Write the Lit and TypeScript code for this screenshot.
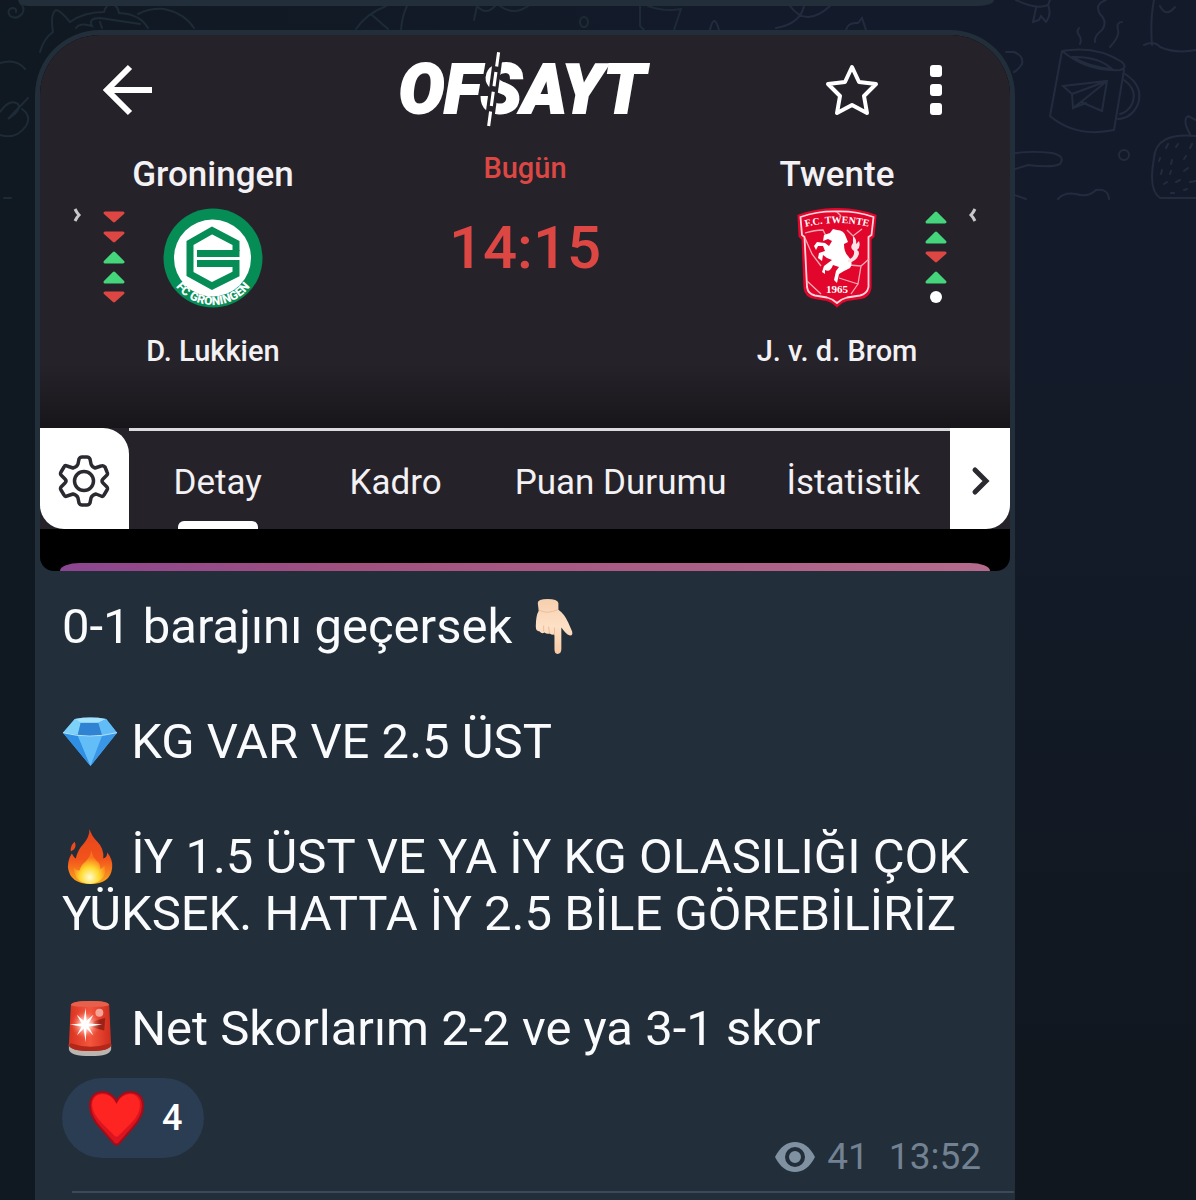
import { LitElement, html, svg, css } from 'lit';
import { customElement, property, state } from 'lit/decorators.js';
import { classMap } from 'lit/directives/class-map.js';

type Result = 'win' | 'loss' | 'draw';

/**
 * Last five results, newest at the bottom.
 */
@customElement('form-guide')
export class FormGuide extends LitElement {
  @property({ attribute: false })
  results: Result[] = [];

  static styles = css`
    :host {
      display: flex;
      flex-direction: column;
      align-items: center;
      gap: 6px;
    }

    svg {
      display: block;
      width: 24px;
      height: 14px;
    }

    .win {
      fill: #45d67c;
      stroke: #45d67c;
    }

    .loss {
      fill: #dc4744;
      stroke: #dc4744;
    }

    .draw {
      fill: #fff;
    }
  `;

  private shape(result: Result) {
    if (result === 'draw') return svg`<circle cx="12" cy="7" r="6" />`;
    const d = result === 'win' ? 'M12 3 L21 12 H3 Z' : 'M12 11 L21 3 H3 Z';
    return svg`<path d=${d} stroke-width="3" stroke-linejoin="round" />`;
  }

  render() {
    return this.results.map(
      (r) => html`<svg class=${r} viewBox="0 0 24 14" aria-label=${r}>${this.shape(r)}</svg>`
    );
  }
}

const groningenCrest = html`
  <svg class="crest" viewBox="0 0 100 100" aria-label="FC Groningen">
    <circle cx="50" cy="50" r="49.5" fill="#058d55" />
    <circle cx="49.5" cy="50" r="38.5" fill="#fff" />
    <path
      d="M73 43 V35 L49 22.5 L27 35 V66 L49 78 L73 66 V55.5 H34"
      fill="none"
      stroke="#058d55"
      stroke-width="7"
    />
    <path d="M34 45.5 H76.5" stroke="#058d55" stroke-width="7" />
    <path id="arc" d="M6 66.5 A47 47 0 0 0 94 66.5" fill="none" />
    <text fill="#fff" font-family="Roboto, sans-serif" font-weight="900" font-size="12">
      <textPath href="#arc" startOffset="50%" text-anchor="middle">FC GRONINGEN</textPath>
    </text>
  </svg>
`;

const twenteCrest = html`
  <svg class="crest" viewBox="0 0 100 100" aria-label="FC Twente">
    <path
      d="M12 8 Q31 1 50 1.5 Q69 1 88 8 L86 28 L83 31 V80 Q82 88 74 89.5 L60 91.5 Q54 93 50 97.5 Q46 93 40 91.5 L28 89.5 Q19 88 18 80 L16 31 L13 28 Z"
      fill="#e2062c"
      stroke="#e2062c"
      stroke-width="3"
    />
    <path
      d="M13.5 9 Q31 3 50 3.5 Q69 3 86.5 9 L84.5 27 L81.5 29 V79 Q80 86 73 87.5 L60 89.5 Q54 91 50 95 Q46 91 40 89.5 L28 87.5 Q21 86 20 79 L17.5 29 L15 27 Z"
      fill="none"
      stroke="#fbd6dc"
      stroke-width="1.8"
    />
    <path
      d="M18 25 Q28 22 36 22 L40 30 M18 30 L25 46 L34 58 M60 22 L66 28 L75 21 M82 51 L74 58 L62 57 M74 58 L71 76 L52 70 M71 76 L64 86 M20 73 L34 86 M50 4 L54 8"
      fill="none"
      stroke="#f7a9b5"
      stroke-width="1.3"
    />
    <path
      d="M37 27 L43 25 L46 21 L50 22 Q57 22 59 29 L61 34 L57 36 Q57 44 61 48 Q67 54 63 60 L57 63 L52 66 L50 75 L47 72 L49 63 L52 59 L46 57 Q43 65 38 62 L38 66 L35 64 L37 58 L45 52 L40 50 L36 47 L35 53 L31 50 L32 45 L38 43 L36 38 L31 38 L29 42 L27 38 L30 34 L38 35 L42 38 L45 33 L41 31 L36 33 Z"
      fill="#fff"
    />
    <path
      d="M61 52 Q68 49 67 43 Q62 40 66 35 L66 28 Q70 31 69 36 L72 33 Q74 39 70 42 Q74 44 70 50 Q66 55 61 54 Z"
      fill="#fbe3e7"
    />
    <g fill="#fff" font-family="Liberation Serif, serif" font-weight="700" text-anchor="middle">
      <path id="brow" d="M14 20 Q50 10 86 20" fill="none" />
      <text font-size="10"><textPath href="#brow" startOffset="50%">F.C. TWENTE</textPath></text>
      <text x="50" y="85" font-size="11">1965</text>
    </g>
  </svg>
`;

/**
 * Match header as the score app draws it: teams, kick-off and tabs.
 */
@customElement('match-card')
export class MatchCard extends LitElement {
  @state()
  private tab = 'Detay';

  private tabs = ['Detay', 'Kadro', 'Puan Durumu', 'İstatistik'];

  static styles = css`
    :host {
      display: block;
      overflow: hidden;
      border-radius: 60px 60px 14px 14px;
      background: #000;
      color: #f3f1f3;
      font-family: Roboto, 'Liberation Sans', sans-serif;
    }

    button {
      margin: 0;
      padding: 0;
      border: 0;
      background: none;
      color: inherit;
      font: inherit;
      cursor: pointer;
    }

    svg {
      display: block;
    }

    .top {
      background: linear-gradient(#25222a 0, #25222a 330px, #18151a 100%);
    }

    .bar {
      display: grid;
      grid-template-columns: 1fr auto 1fr;
      align-items: center;
      height: 110px;
      padding: 0 60px;
    }

    .actions {
      display: flex;
      justify-content: flex-end;
      align-items: center;
      gap: 42px;
    }

    .logo {
      padding-right: 6px;
      font-size: 68px;
      font-weight: 900;
      font-style: italic;
      line-height: 72px;
      color: #fff;
      -webkit-text-stroke: 2px #fff;
    }

    .cut {
      position: relative;
    }

    .cut svg {
      position: absolute;
      left: 0;
      top: 0;
      width: 100%;
      height: 100%;
      overflow: visible;
    }

    .match {
      display: grid;
      grid-template-columns: 40px 34px 164px 1fr 164px 34px 40px;
      justify-items: center;
      padding: 9px 17px 60px;
    }

    .team {
      display: flex;
      flex-direction: column;
      align-items: center;
      white-space: nowrap;
      font-weight: 500;
    }

    .name {
      font-size: 35px;
      line-height: 42px;
    }

    .crest {
      width: 100px;
      height: 100px;
      margin: 12px 0 26px;
      overflow: visible;
    }

    .coach {
      font-size: 29px;
      line-height: 34px;
    }

    .kickoff {
      display: flex;
      flex-direction: column;
      align-items: center;
      gap: 34px;
      color: #dc4744;
      font-weight: 500;
    }

    .day {
      font-size: 29px;
      line-height: 28px;
    }

    .hour {
      font-size: 60px;
      line-height: 64px;
    }

    form-guide {
      margin-top: 56px;
    }

    .more {
      align-self: start;
      margin-top: 54px;
    }

    .nav {
      display: flex;
      height: 101px;
      background: #25222a;
    }

    .tile {
      display: flex;
      align-items: center;
      justify-content: center;
      padding-top: 4px;
      background: #fff;
    }

    .settings {
      width: 89px;
      border-radius: 0 26px 0 24px;
    }

    .next {
      width: 60px;
      border-radius: 0 0 24px 0;
    }

    .tabs {
      display: flex;
      flex: 1;
      border-top: 3px solid #dcdadd;
    }

    .tab {
      position: relative;
      min-width: 178px;
      padding: 4px 30px 0;
      font-size: 35px;
      white-space: nowrap;
    }

    .tab:last-child {
      flex: 1;
    }

    .tab.active::after {
      content: '';
      position: absolute;
      left: 50%;
      bottom: 0;
      width: 80px;
      height: 8px;
      margin-left: -40px;
      border-radius: 6px 6px 0 0;
      background: #fff;
    }

    .promo {
      padding: 34px 20px 0;
    }

    .promo div {
      height: 8px;
      border-radius: 20px 20px 0 0 / 8px 8px 0 0;
      background: linear-gradient(90deg, #8c4590, #a0507f 30%, #b56b8c);
    }
  `;

  render() {
    return html`
      <div class="top">
        <div class="bar">
          <button aria-label="Geri">
            <svg width="54" height="54" viewBox="0 0 54 54" fill="none" stroke="#fff" stroke-width="6">
              <path d="M52 27 H6 M30 4 L7 27 L30 50" />
            </svg>
          </button>
          <div class="logo">OF<span class="cut">S<svg viewBox="0 0 40 72" preserveAspectRatio="none" fill="none">
                <path d="M18 2 L8 71" stroke="#25222a" stroke-width="9" />
                <path d="M18 2 L8 71" stroke="#fff" stroke-width="3" stroke-dasharray="13 5" /></svg></span>AYT</div>
          <div class="actions">
            <button aria-label="Favorilere ekle">
              <svg width="56" height="56" viewBox="0 0 56 56" fill="none" stroke="#fff" stroke-width="4" stroke-linejoin="round">
                <path d="M28 5 L35 20 L52 22 L40 34 L43 51 L28 43 L13 51 L16 34 L4 22 L21 20 Z" />
              </svg>
            </button>
            <button aria-label="Menü">
              <svg width="28" height="52" viewBox="0 0 28 52" fill="#fff">
                <rect x="8" y="1" width="12" height="12" rx="3" />
                <rect x="8" y="20" width="12" height="12" rx="3" />
                <rect x="8" y="39" width="12" height="12" rx="3" />
              </svg>
            </button>
          </div>
        </div>

        <div class="match">
          <button class="more" aria-label="Groningen formu">
            <svg width="12" height="14" viewBox="0 0 12 14" fill="none" stroke="#c9c7ca" stroke-width="3">
              <path d="M4 1 Q6 5 8 7 Q6 9 4 13" />
            </svg>
          </button>
          <form-guide .results=${['loss', 'loss', 'win', 'win', 'loss'] as Result[]}></form-guide>
          <div class="team">
            <span class="name">Groningen</span>
            ${groningenCrest}
            <span class="coach">D. Lukkien</span>
          </div>
          <div class="kickoff">
            <span class="day">Bugün</span>
            <time class="hour" datetime="14:15">14:15</time>
          </div>
          <div class="team">
            <span class="name">Twente</span>
            ${twenteCrest}
            <span class="coach">J. v. d. Brom</span>
          </div>
          <form-guide .results=${['win', 'win', 'loss', 'win', 'draw'] as Result[]}></form-guide>
          <button class="more" aria-label="Twente formu">
            <svg width="12" height="14" viewBox="0 0 12 14" fill="none" stroke="#c9c7ca" stroke-width="3">
              <path d="M8 1 Q6 5 4 7 Q6 9 8 13" />
            </svg>
          </button>
        </div>
      </div>

      <nav class="nav">
        <button class="tile settings" aria-label="Ayarlar">
          <svg width="52" height="52" viewBox="0 0 52 52" fill="none" stroke="#2b2a30" stroke-width="3.5" stroke-linejoin="round">
            <path
              d="M21 4 Q22 2 24 2 H29 Q31 2 32 4 L33 9 Q34 12 37 13 L43 11 Q45 10 47 12 L49 17 Q50 19 49 20 L45 24 Q43 26 45 28 L49 32 Q50 34 49 35 L46 40 Q45 42 43 41 L38 39 Q34 40 33 43 L32 48 Q31 50 29 50 H24 Q22 50 21 48 L20 43 Q19 40 15 39 L9 41 Q7 42 6 40 L3 35 Q2 34 3 32 L7 28 Q9 26 7 24 L3 20 Q2 19 3 17 L6 12 Q7 10 9 11 L15 13 Q19 12 20 9 Z"
            />
            <circle cx="26" cy="26" r="9.5" />
          </svg>
        </button>
        <div class="tabs" role="tablist">
          ${this.tabs.map(
            (t) => html`
              <button
                role="tab"
                aria-selected=${t === this.tab}
                class=${classMap({ tab: true, active: t === this.tab })}
                @click=${() => (this.tab = t)}
              >
                ${t}
              </button>
            `
          )}
        </div>
        <button class="tile next" aria-label="Sonraki">
          <svg width="20" height="30" viewBox="0 0 20 30" fill="none" stroke="#2b2a30" stroke-width="5" stroke-linecap="round">
            <path d="M5 4 L16 15 L5 26" />
          </svg>
        </button>
      </nav>

      <div class="promo"><div></div></div>
    `;
  }
}

const pointDown = html`
  <svg class="emoji" viewBox="0 0 58 58" aria-label="👇🏻">
    <defs>
      <linearGradient id="skin" x2="0" y2="1">
        <stop offset="0" stop-color="#f6cfae" />
        <stop offset="0.5" stop-color="#fde0c6" />
        <stop offset="1" stop-color="#f7c9a3" />
      </linearGradient>
    </defs>
    <path
      d="M14 5 Q14 1 24 1 Q34 1 35 5 L35 12 Q41 16 45 25 L49 34 Q50 39 46 38 Q43 37 38 30 L38 52 Q38 57 34 57 Q31 57 31 52 L31 37 Q29 38 26 36 Q23 37 21 35 Q18 37 16 34 Q12 34 12 29 Q12 18 15 13 Z"
      fill="url(#skin)"
    />
    <path d="M15 12 Q23 17 34 12 M20 28 L20 34 M25 29 L26 36 M31 30 V38" fill="none" stroke="#ecbd99" stroke-width="1" />
  </svg>
`;

const gem = html`
  <svg class="emoji" viewBox="0 0 58 58" aria-label="💎">
    <path d="M1 20 L13 6 Q29 3 45 6 L56 20 L29 54 Z" fill="#4fa9ee" />
    <path d="M13 6 L19 10 L16 22 L1 20 Z" fill="#7ed2f8" />
    <path d="M19 10 L37 10 L41 23 Q28 25 16 23 Z" fill="#2f83d2" />
    <path d="M13 6 Q29 3 45 6 L37 10 H19 Z" fill="#a5e2fb" />
    <path d="M45 6 L56 20 L41 23 L37 10 Z" fill="#62bcf5" />
    <path d="M1 20 L16 23 L29 54 Z" fill="#2f8fe4" />
    <path d="M16 23 Q28 25 41 23 L29 54 Z" fill="#63bdf6" />
    <path d="M41 23 L56 20 L29 54 Z" fill="#3a97e8" />
    <path d="M1 20 Q28 27 56 20" fill="none" stroke="#b4e6fd" stroke-width="1" />
  </svg>
`;

const fire = html`
  <svg class="emoji" viewBox="0 0 58 58" aria-label="🔥">
    <defs>
      <linearGradient id="flame" x2="0" y2="1">
        <stop offset="0" stop-color="#e8421c" />
        <stop offset="0.55" stop-color="#f2541b" />
        <stop offset="1" stop-color="#fba91d" />
      </linearGradient>
      <radialGradient id="core" cx="0.5" cy="0.8" r="0.6">
        <stop offset="0" stop-color="#fffbd0" />
        <stop offset="0.5" stop-color="#ffd92e" />
        <stop offset="1" stop-color="#f9721d" />
      </radialGradient>
    </defs>
    <path
      d="M28 1 Q30 8 36 14 Q43 21 42 31 Q46 30 46 25 Q52 32 51 41 Q49 57 29 57 Q8 57 6 40 Q6 32 10 26 Q12 30 14 31 Q16 22 22 16 Q28 9 28 1 Z"
      fill="url(#flame)"
    />
    <path d="M13 14 Q15 19 12 22 L9 24 Q8 18 13 14 Z" fill="#ee4a1b" />
    <path
      d="M30 23 Q31 30 36 34 Q39 36 39 42 L44 38 Q46 55 29 57 Q12 56 12 40 Q15 44 18 43 Q19 38 24 34 Q29 29 30 23 Z"
      fill="url(#core)"
    />
  </svg>
`;

const siren = html`
  <svg class="emoji" viewBox="0 0 58 58" aria-label="🚨">
    <defs>
      <linearGradient id="lamp" x2="1" y2="0">
        <stop offset="0" stop-color="#d8321f" />
        <stop offset="0.5" stop-color="#f4553d" />
        <stop offset="1" stop-color="#cf2c1c" />
      </linearGradient>
      <radialGradient id="glow">
        <stop offset="0" stop-color="#fff" />
        <stop offset="0.4" stop-color="#ffb5a6" />
        <stop offset="1" stop-color="#f4553d" stop-opacity="0" />
      </radialGradient>
    </defs>
    <path d="M7 45 Q29 50 50 45 V50 Q49 57 29 57 Q8 57 7 50 Z" fill="#b9b6b2" />
    <path d="M9 5 Q10 1 29 1 Q47 1 48 5 L50 46 Q48 52 29 52 Q9 52 7 46 Z" fill="url(#lamp)" />
    <path d="M9 5 Q10 1 29 1 Q47 1 48 5 Q46 7 29 7 Q11 7 9 5 Z" fill="#e8604c" />
    <path d="M9 44 Q29 51 49 44 L50 46 Q48 52 29 52 Q9 52 7 46 Z" fill="#b3261a" />
    <path d="M32 22 L44 18 L43 31 L31 28 Z" fill="#9c2218" />
    <circle cx="38" cy="13" r="4" fill="#f6a497" />
    <circle cx="24" cy="25" r="15" fill="url(#glow)" />
    <path
      d="M24 8 L25 21 L32 15 L27 24 L41 25 L27 27 L32 36 L25 29 L24 43 L22 29 L15 36 L20 27 L8 25 L20 24 L15 15 L22 21 Z"
      fill="#fff"
    />
  </svg>
`;

const heart = html`
  <svg class="heart" viewBox="0 0 56 56" aria-hidden="true">
    <path
      d="M28 11 Q23 2 14 2 Q2 3 2 16 Q2 26 12 37 L25 52 Q28 55 31 52 L44 37 Q54 26 54 16 Q54 3 42 2 Q33 2 28 11 Z"
      fill="#dc1420"
      stroke="#a50c18"
      stroke-width="2"
    />
    <path
      d="M28 14 Q23 4 14 4 Q4 5 4 15 Q5 24 14 33 L26 45 Q28 47 30 45 L42 33 Q51 24 51 15 Q51 5 42 4 Q33 4 28 14 Z"
      fill="#fe2422"
    />
  </svg>
`;

@customElement('app-root')
export class AppRoot extends LitElement {
  @state()
  private liked = false;

  static styles = css`
    :host {
      display: flex;
      flex-direction: column;
      position: relative;
      min-height: 100vh;
      overflow: hidden;
      background:
        linear-gradient(90deg, #101922 0, #101922 20px, transparent 60%),
        linear-gradient(#131a2a 0, #131b29 40%, #10171f 90%);
      color: #fafbfc;
      font-family: Roboto, 'Liberation Sans', sans-serif;
    }

    .doodles {
      position: absolute;
      top: 0;
      fill: none;
      stroke-width: 2;
      stroke-linecap: round;
    }

    .left {
      left: 0;
      stroke: #1d2b36;
    }

    .right {
      right: 0;
      stroke: #232c3e;
    }

    .previous,
    .bubble {
      position: relative;
      background: #222e3a;
    }

    .previous {
      height: 6px;
      margin: 0 202px 24px 18px;
      border-radius: 0 0 16px 10px / 0 0 6px 6px;
    }

    .bubble {
      flex: 1;
      margin: 0 181px 0 35px;
      padding: 5px 5px 0;
      border-radius: 65px 65px 0 0;
    }

    .text {
      display: flex;
      flex-direction: column;
      gap: 58px;
      padding: 27px 29px 0 22px;
      font-size: 49px;
      line-height: 57px;
    }

    p {
      margin: 0;
    }

    .emoji {
      width: 57px;
      height: 57px;
      vertical-align: -12px;
    }

    .foot {
      display: flex;
      justify-content: space-between;
      padding: 21px 29px 13px 22px;
    }

    .reaction {
      display: flex;
      align-items: center;
      gap: 17px;
      height: 80px;
      margin: 0 0 20px;
      padding: 0 22px 0 26px;
      border: 0;
      border-radius: 40px;
      background: #2b3d52;
      color: #fff;
      font: 500 36px Roboto, 'Liberation Sans', sans-serif;
      cursor: pointer;
    }

    .heart {
      width: 57px;
      height: 57px;
    }

    .meta {
      display: flex;
      align-items: center;
      align-self: flex-end;
      gap: 12px;
      color: #728292;
      font-size: 37px;
      line-height: 42px;
    }

    .meta span {
      margin-right: 8px;
    }

    .comments {
      height: 9px;
      margin: 0 -4px 0 32px;
      border-top: 2px solid #3b495b;
    }
  `;

  render() {
    return html`
      <svg class="doodles left" width="760" height="220" aria-hidden="true">
        <path d="M20 3 Q26 8 22 14 Q16 20 10 16 Q6 10 12 8 Q17 8 16 12" />
        <path d="M40 52 Q44 38 53 32 Q50 14 56 10 Q60 10 70 22 Q84 12 104 12 Q106 4 112 4 Q118 6 119 13 Q140 14 148 28" />
        <path d="M76 28 Q80 22 92 26 Q88 18 100 18 L140 24 M100 22 L102 28 M138 14 Q150 8 164 9 Q184 13 194 28" />
        <path d="M356 29 Q366 14 386 6 M372 15 L388 29 M407 6 Q402 16 401 30 M477 6 L474 20 M477 6 Q486 16 495 6 M500 6 Q514 16 528 6" />
        <ellipse cx="584" cy="22" rx="4" ry="5" />
        <path d="M640 6 V26 L644 30 M648 6 Q664 12 681 9 L674 30" />
        <path d="M0 63 Q16 58 25 69 M0 112 Q10 98 18 104 Q22 110 8 119 L28 98 M22 109 Q32 116 26 126 Q16 140 0 135 M4 198 H11" />
      </svg>
      <svg class="doodles right" width="500" height="220" aria-hidden="true">
        <path d="M14 30 Q18 12 23 30 M94 6 Q110 28 134 6 M108 6 Q104 24 80 28 M150 30 Q152 22 162 23 L166 18 L170 30" />
        <path d="M320 0 Q340 10 352 5 L354 0 M340 8 L337 22 L343 20 L345 16 L350 22 Q356 14 352 5" />
        <g transform="translate(-20 0)">
          <path d="M403 28 Q400 32 403 35 Q406 39 404 44 M430 0 Q418 4 424 14 Q432 22 426 30 Q418 36 419 42 M446 22 Q440 22 442 30 Q444 36 434 47" />
          <path d="M386 51 L374 116 Q400 138 438 130 L448 70 M386 51 Q420 45 446 62 Q452 68 444 70 Q412 72 386 51 M396 57 Q416 68 436 69 Q422 56 396 57" />
          <path d="M449 74 Q468 86 462 104 Q456 118 442 119 M448 80 Q462 90 456 104 Q452 112 444 114" />
          <path d="M387 86 L431 81 L426 111 L405 102 L397 108 L396 94 Z M396 94 L431 81 L405 102 M397 108 L410 103" />
          <path d="M476 45 Q474 20 478 0 M484 6 Q490 18 499 7 M468 45 Q478 40 484 47 Q500 54 520 50" />
          <path d="M330 52 H338 Q348 56 346 64 Q342 70 338 72 M330 155 Q350 150 376 153 Q390 156 384 164 Q376 168 352 165 L330 172" />
          <circle cx="448" cy="155" r="5" />
          <path d="M382 199 Q388 192 400 194 Q412 198 420 190 Q432 188 433 199 M330 192 L350 199" />
          <path d="M520 136 Q480 132 478 158 Q472 190 484 198 H520 M514 134 Q506 120 512 116 L520 120" />
          <path d="M490 148 L492 144 M500 147 L502 144 M514 148 L516 144 M484 158 L483 161 M496 160 L495 164 M508 159 L510 156 M486 170 L485 174 M494 174 L495 171 M508 171 L512 168 M488 184 L491 182 M500 182 L504 180 M514 182 L520 181 M495 193 H498 M508 190 L511 189" />
        </g>
      </svg>

      <div class="previous"></div>
      <article class="bubble">
        <match-card></match-card>
        <div class="text">
          <p>0-1 barajını geçersek ${pointDown}</p>
          <p>${gem} KG VAR VE 2.5 ÜST</p>
          <p>${fire} İY 1.5 ÜST VE YA İY KG OLASILIĞI ÇOK YÜKSEK. HATTA İY 2.5 BİLE GÖREBİLİRİZ</p>
          <p>${siren} Net Skorlarım 2-2 ve ya 3-1 skor</p>
        </div>
        <div class="foot">
          <button
            class="reaction"
            aria-pressed=${this.liked}
            @click=${() => (this.liked = !this.liked)}
          >
            ${heart}<span>${this.liked ? 5 : 4}</span>
          </button>
          <div class="meta">
            <svg width="40" height="30" viewBox="0 0 40 30" aria-label="Görüntülenme">
              <path d="M0 15 C5 5 12 0 20 0 C28 0 35 5 40 15 C35 25 28 30 20 30 C12 30 5 25 0 15 Z" fill="#8091a1" />
              <circle cx="20" cy="15" r="8" fill="none" stroke="#222e3a" stroke-width="4" />
            </svg>
            <span>41</span>
            <time datetime="13:52">13:52</time>
          </div>
        </div>
        <div class="comments"></div>
      </article>
    `;
  }
}

declare global {
  interface HTMLElementTagNameMap {
    'form-guide': FormGuide;
    'match-card': MatchCard;
    'app-root': AppRoot;
  }
}
